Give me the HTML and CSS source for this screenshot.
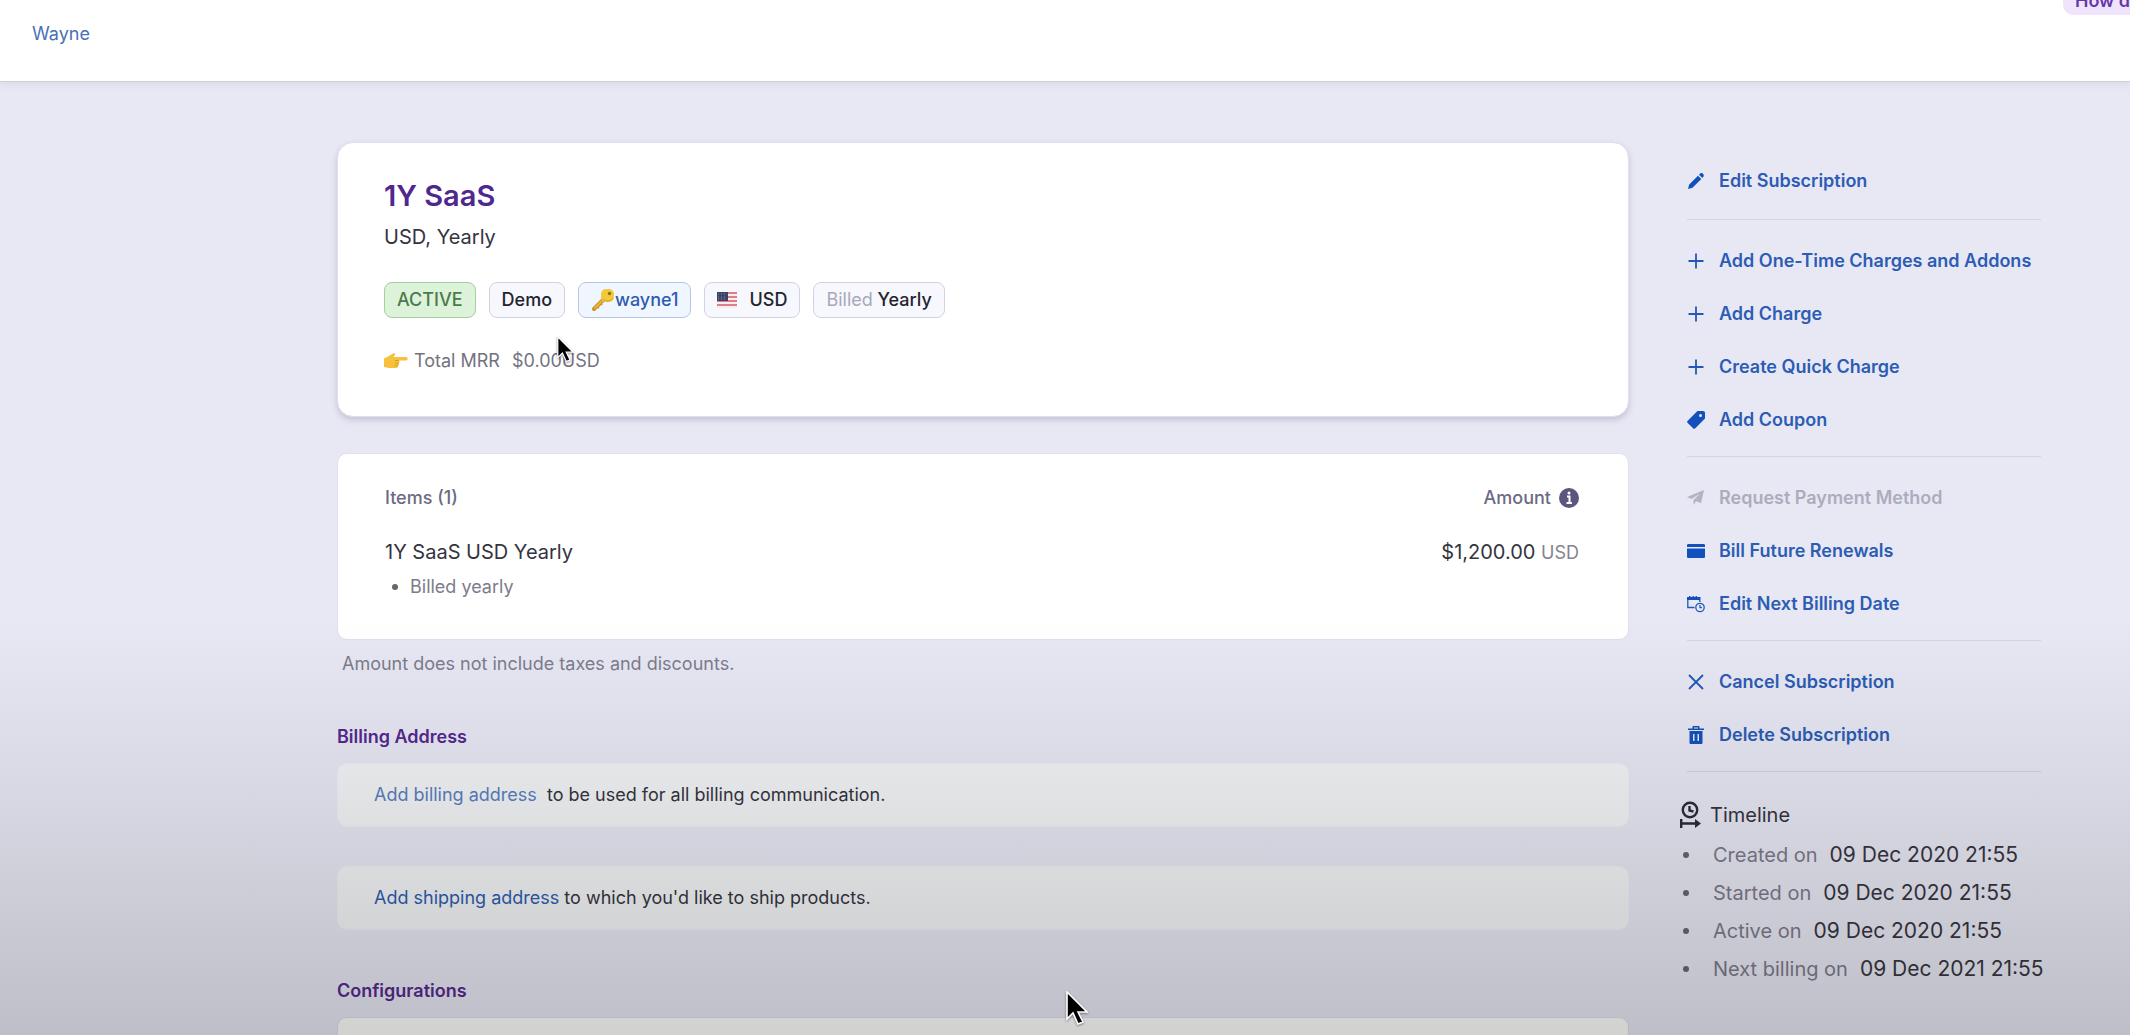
FILE: index.html
```html
<!DOCTYPE html>
<html lang="en">
<head>
  <meta charset="UTF-8" />
  <meta name="viewport" content="width=device-width, initial-scale=1.0" />
  <title>1Y SaaS - Wayne</title>
  <link rel="stylesheet" href="styles.css">
</head>
<body>
  <header class="topbar">
    <a href="#" class="customer">Wayne</a>
    <a href="#" class="help-pill">How d</a>
  </header>

  <div class="layout">
    <main class="content">
      <section class="card summary">
        <h1>1Y SaaS</h1>
        <p class="plan">USD, Yearly</p>
        <div class="badges">
          <span class="badge badge-active">ACTIVE</span>
          <span class="badge">Demo</span>
          <a href="#" class="badge badge-link">
            <svg width="24" height="24" viewBox="0 0 24 24" aria-hidden="true">
              <path d="M13 11 3 21" stroke="#c9922a" stroke-width="4" stroke-linecap="round"/>
              <path d="m5 17 3 3M8 14l3 3" stroke="#c9922a" stroke-width="2"/>
              <path d="M12.5 11.5 3.5 20.5" stroke="#e5b53c" stroke-width="2"/>
              <rect x="10" y="1" width="13" height="13" rx="5" fill="#f3c93c"/>
              <path d="M12 11c3 3 7 3 10-1" stroke="#d49d26" fill="none"/>
              <circle cx="18.500" cy="5.500" r="1.700" fill="#8d6a1d"/>
            </svg>wayne1
          </a>
          <span class="badge badge-flag">
            <svg width="20" height="16" viewBox="0 0 20 16" aria-hidden="true">
              <rect width="20" height="16" fill="#f4eef0"/>
              <path d="M0 1h20M0 5h20M0 9h20M0 13h20" stroke="#dd7d88" stroke-width="2"/>
              <rect width="11" height="9" fill="#3d4267"/>
              <path d="M1 2h9M1 5h9M1 7h9" stroke="#8a8dab" stroke-dasharray="1 2"/>
            </svg>
            USD
          </span>
          <span class="badge"><span class="faint">Billed</span> Yearly</span>
        </div>
        <p class="mrr">
          <svg width="24" height="16" viewBox="0 0 24 16" aria-hidden="true">
            <path d="M0 5.500 5 3l4-2.500c2-.8 3 .8 1.500 2L9.500 4H22c2.200 0 2.200 3.500 0 3.500h-7c1 1 .8 2.200-.3 2.700.8 1 .3 2.200-.8 2.500.3 1.300-.6 2.300-2 2.300H5L0 14z" fill="#f7c13c"/>
            <path d="M15 7.500h-4M14.700 10.200H11M14 12.700h-3.500" stroke="#d89a2b" fill="none"/>
          </svg>
          <span>Total MRR</span>
          <span class="mrr-value">$0.00USD</span>
        </p>
      </section>

      <section class="card items">
        <table>
          <thead>
            <tr>
              <th>Items (1)</th>
              <th>
                <span class="amount-head">Amount
                  <svg width="20" height="20" viewBox="0 0 20 20" aria-hidden="true">
                    <circle cx="10" cy="10" r="10" fill="#5b567d"/>
                    <path d="M8 8.500h2.500V15M7.500 15h5.500" stroke="#fff" stroke-width="2" fill="none"/>
                    <circle cx="10" cy="5" r="1.500" fill="#fff"/>
                  </svg>
                </span>
              </th>
            </tr>
          </thead>
          <tbody>
            <tr>
              <td>
                1Y SaaS USD Yearly
                <ul>
                  <li>Billed yearly</li>
                </ul>
              </td>
              <td>$1,200.00 <small>USD</small></td>
            </tr>
          </tbody>
        </table>
      </section>
      <p class="note">Amount does not include taxes and discounts.</p>

      <h2>Billing Address</h2>
      <div class="card address"><a href="#" class="soft">Add billing address</a> &nbsp;to be used for all billing communication.</div>
      <div class="card address"><a href="#">Add shipping address</a> to which you'd like to ship products.</div>

      <h2>Configurations</h2>
      <div class="card config"></div>
    </main>

    <aside class="sidebar">
      <div class="actions">
        <button type="button">
          <svg viewBox="0 0 18 18"><path d="m1 17 1.200-4.500L11 3.700l3.300 3.300-8.800 8.800zM12 2.700l1.300-1.300c1.600-1.300 4.400 1.300 3.200 3.200L15.300 6z"/></svg>
          Edit Subscription
        </button>
      </div>
      <div class="actions">
        <button type="button">
          <svg viewBox="0 0 18 18"><path class="line" d="M9 1.500v15M1.500 9h15"/></svg>
          Add One-Time Charges and Addons
        </button>
        <button type="button">
          <svg viewBox="0 0 18 18"><path class="line" d="M9 1.500v15M1.500 9h15"/></svg>
          Add Charge
        </button>
        <button type="button">
          <svg viewBox="0 0 18 18"><path class="line" d="M9 1.500v15M1.500 9h15"/></svg>
          Create Quick Charge
        </button>
        <button type="button">
          <svg viewBox="0 0 18 18"><path fill-rule="evenodd" d="M10.500 0H16c1.300 0 2 .8 2 2v5.500L8.300 17.300c-.7.700-1.500.7-2.200 0L.7 11.900c-.7-.7-.7-1.500 0-2.200zM13.500 3a1.500 1.500 0 1 0 0 3 1.500 1.500 0 0 0 0-3z"/></svg>
          Add Coupon
        </button>
      </div>
      <div class="actions">
        <button type="button" disabled>
          <svg viewBox="0 0 18 18"><path d="M17 1 0 8l4.500 2L13 4.500 6.500 11v5l2.800-3.700 4.700 2z"/></svg>
          Request Payment Method
        </button>
        <button type="button">
          <svg viewBox="0 0 18 18"><path d="M1.500 2h15c1 0 1.500.5 1.500 1.500V5H0V3.500C0 2.500.5 2 1.500 2zM0 6.500h18v8c0 1-.5 1.500-1.500 1.500h-15C.5 16 0 15.500 0 14.500z"/></svg>
          Bill Future Renewals
        </button>
        <button type="button">
          <svg viewBox="0 0 18 18"><path d="M0 2h2V1h1.500v1h2V1H7v1h1.500V1H10v1h3.500v3H0z"/><path class="thin" d="M.8 5v7.500h6.700M12.800 5v2"/><circle class="thin" cx="13" cy="12.500" r="4.200"/><path class="thin" d="M13 10v2.700h2"/></svg>
          Edit Next Billing Date
        </button>
      </div>
      <div class="actions">
        <button type="button">
          <svg viewBox="0 0 18 18"><path class="line" d="m2 2 14 14M16 2 2 16"/></svg>
          Cancel Subscription
        </button>
        <button type="button">
          <svg viewBox="0 0 18 18"><path fill-rule="evenodd" d="M5.500 2.500V1c0-.6.4-1 1-1h5c.6 0 1 .4 1 1v1.500H17V4H1V2.500zM7 2.500h4v-1H7zM2.500 5h13v11.500c0 1-.5 1.500-1.500 1.500H4c-1 0-1.500-.5-1.500-1.500zM6 8v7h1.500V8zm4.500 0v7H12V8z"/></svg>
          Delete Subscription
        </button>
      </div>

      <section class="timeline">
        <h3>
          <svg width="21" height="28" viewBox="0 0 21 28" aria-hidden="true">
            <circle cx="10" cy="9" r="7.200"/>
            <path d="M9.500 5v4.500l4 1M1.200 18v9M1 22.500h16"/>
            <path class="tip" d="m15 18 6 4.500-6 4.500z"/>
          </svg>
          Timeline
        </h3>
        <ul>
          <li>Created on <time datetime="2020-12-09T21:55">09 Dec 2020 21:55</time></li>
          <li>Started on <time datetime="2020-12-09T21:55">09 Dec 2020 21:55</time></li>
          <li>Active on <time datetime="2020-12-09T21:55">09 Dec 2020 21:55</time></li>
          <li>Next billing on <time datetime="2021-12-09T21:55">09 Dec 2021 21:55</time></li>
        </ul>
      </section>
    </aside>
  </div>

  <!-- mouse pointers -->
  <svg class="pointer pointer-small" viewBox="0 0 22 34" aria-hidden="true"><path d="M1 1v27l6-6 5 11 5-2-5-10h9z"/></svg>
  <svg class="pointer pointer-large" viewBox="0 0 22 34" aria-hidden="true"><path d="M1 1v27l6-6 5 11 5-2-5-10h9z"/></svg>
</body>
</html>
```
FILE: styles.css
```css
* {
  box-sizing: border-box;
}
body {
  margin: 0;
  height: 100vh;
  position: relative;
  overflow: hidden;
  background: #e8e8f5;
  font-family: Inter, "Liberation Sans", sans-serif;
  font-size: 18px;
  line-height: 24px;
  color: #34343f;
}
/* shade over the lower part of the window */
body::after {
  content: "";
  position: absolute;
  left: 0;
  right: 0;
  bottom: 0;
  height: 40%;
  background: linear-gradient(rgba(12, 12, 8, 0), rgba(12, 12, 8, 0.07) 40%, rgba(12, 12, 8, 0.19));
  pointer-events: none;
}
h1, h2, h3, p, ul {
  margin: 0;
  padding: 0;
  list-style: none;
}
a {
  color: #2c5cb0;
  text-decoration: none;
}

.topbar {
  position: relative;
  height: 82px;
  padding: 22px 32px;
  background: #fff;
  border-bottom: 1px solid #cfcfd4;
  box-shadow: 0 1px 8px rgba(60, 60, 60, 0.1);
}
.customer {
  color: #4a70b8;
}
.help-pill {
  position: absolute;
  top: -12px;
  right: 0;
  padding: 1px 0 2px 12px;
  border-radius: 10px 0 0 10px;
  background: #f0e4fc;
  color: #6538a8;
  font-weight: 600;
}

.layout {
  display: flex;
  gap: 51px;
  padding: 60px 85px 0 337px;
}
.content {
  flex: 1;
  min-width: 0;
}

.card {
  background: #fff;
  border: 1px solid #dfdfee;
  border-radius: 10px;
}
.summary {
  padding: 35px 46px 43px;
  border-radius: 16px;
  box-shadow: 0 3px 6px rgba(60, 60, 90, 0.22);
}
h1 {
  font-size: 29px;
  line-height: 36px;
  font-weight: 600;
  color: #4f2790;
}
.plan {
  margin-top: 9px;
  font-size: 20px;
  line-height: 28px;
}
.badges {
  display: flex;
  gap: 13px;
  margin-top: 31px;
}
.badge {
  height: 36px;
  padding: 5px 12px;
  border: 1px solid #d2d2e4;
  border-radius: 8px;
  background: #f7f7fe;
  font-weight: 500;
  color: #24242f;
}
.badge-active {
  background: #dcf3da;
  border-color: #a3cfa1;
  color: #4c7a4b;
}
.badge-link,
.badge-flag {
  display: flex;
  align-items: center;
}
.badge-link {
  background: #f0f6ff;
  border-color: #b5c6e6;
  color: #2c5cb0;
}
.badge-flag {
  gap: 12px;
}
.faint {
  color: #a9a8ba;
  font-weight: 400;
}
.mrr {
  display: flex;
  align-items: center;
  gap: 6px;
  margin-top: 31px;
  color: #74727f;
}
.mrr-value {
  margin-left: 6px;
}

.items {
  margin-top: 36px;
  padding: 32px 49px 40px 47px;
}
table {
  width: 100%;
  border-collapse: collapse;
}
th, td {
  padding: 0;
  text-align: left;
  vertical-align: top;
}
th {
  padding-bottom: 28px;
  font-weight: 500;
  color: #6d6a85;
}
td {
  font-size: 20px;
  line-height: 28px;
}
th:last-child,
td:last-child {
  text-align: right;
}
.amount-head {
  display: flex;
  align-items: center;
  justify-content: flex-end;
  gap: 8px;
}
small {
  font-size: 18px;
  color: #85838f;
}
td li {
  display: flex;
  align-items: center;
  gap: 12px;
  margin-top: 9px;
  padding-left: 7px;
  font-size: 18px;
  line-height: 24px;
  color: #7d7b8a;
}
li::before {
  content: "";
  width: 6px;
  height: 6px;
  border-radius: 50%;
  background: #66656f;
}
.note {
  margin: 12px 0 0 5px;
  color: #7d7c8c;
}

h2 {
  margin: 49px 0 14px;
  font-size: 18px;
  line-height: 24px;
  font-weight: 600;
  color: #54298f;
}
.address {
  padding: 19px 36px;
  background: #f3f4f7;
  border-color: #efeff8;
}
.address + .address {
  margin-top: 39px;
}
.soft {
  color: #5a7fc0;
}
.config {
  height: 160px;
}

.sidebar {
  width: 365px;
}
.actions {
  margin: 0 4px 0 7px;
  padding: 14px 0 10px;
  border-bottom: 1px solid #d3d3e1;
}
.actions:first-child {
  padding: 12px 0;
}
.actions button {
  display: flex;
  align-items: center;
  gap: 14px;
  height: 53px;
  padding: 0;
  border: 0;
  background: none;
  font: inherit;
  font-weight: 600;
  color: #2c5cb4;
  white-space: nowrap;
  cursor: pointer;
}
.actions button:disabled {
  color: #adacbc;
  cursor: default;
}
.actions svg {
  width: 18px;
  height: 18px;
  fill: #1450bc;
}
.actions button:disabled svg {
  fill: #b4b3c4;
}
.actions .line,
.actions .thin {
  fill: none;
  stroke: #2358b8;
  stroke-width: 1.8;
}
.actions .thin {
  stroke-width: 1.3;
}

.timeline {
  margin-top: 29px;
  font-size: 20px;
  line-height: 28px;
}
h3 {
  display: flex;
  align-items: center;
  gap: 9px;
  font-size: 20px;
  font-weight: 400;
  color: #34333e;
}
h3 svg {
  fill: none;
  stroke: #2b2a36;
  stroke-width: 2.4;
}
h3 .tip {
  fill: #2b2a36;
  stroke: none;
}
.timeline ul {
  display: flex;
  flex-direction: column;
  gap: 10px;
  margin-top: 12px;
}
.timeline li {
  display: flex;
  align-items: center;
  color: #7b7a8a;
  white-space: nowrap;
}
.timeline li::before {
  margin: 0 24px 0 3px;
}
time {
  margin-left: 12px;
  font-size: 21px;
  color: #35343f;
}

.pointer {
  position: absolute;
  z-index: 1;
  stroke: #fff;
  stroke-width: 1.6;
  filter: drop-shadow(0 1px 1px rgba(0, 0, 0, 0.4));
}
.pointer-small {
  left: 557px;
  top: 336px;
  width: 17px;
}
.pointer-large {
  left: 1066px;
  top: 991px;
  width: 22px;
}
```
